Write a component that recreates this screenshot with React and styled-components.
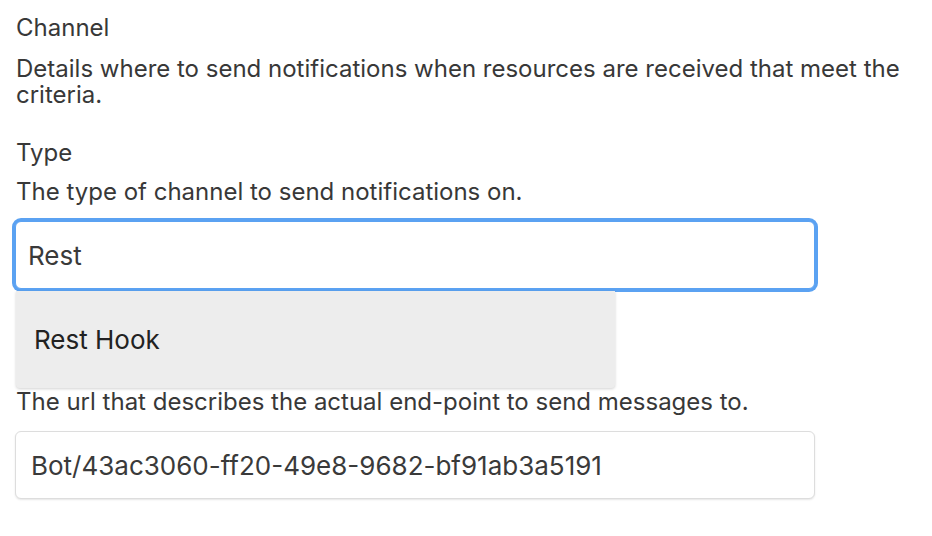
import React from 'react'
import styled, { createGlobalStyle, css } from 'styled-components'

const GlobalStyle = createGlobalStyle`
  html, body {
    margin: 0;
    padding: 0;
    background: #ffffff;
  }
  body {
    font-family: Inter, "Noto Sans", "Liberation Sans", sans-serif;
    color: #383838;
    -webkit-font-smoothing: antialiased;
  }
`;

const Page = styled.div`
  width: 932px;
  height: 536px;
  box-sizing: border-box;
  padding: 15px 16px 0 16px;
  overflow: hidden;
`;

const Heading = styled.div`
  font-size: 24px;
  line-height: 26px;
  color: #383838;
`;

const Text = styled.div`
  font-size: 24px;
  line-height: 26px;
  color: #383838;
  margin-top: ${({ $gap }) => $gap || 13}px;
`;

const Field = styled.div`
  display: flex;
  flex-direction: column;
  margin-top: ${({ $gap }) => $gap}px;
`;

const InputWrap = styled.div`
  position: relative;
  width: 800px;
  margin-top: 16px;
  margin-left: -1px;
`;

const Input = styled.div`
  box-sizing: border-box;
  width: 800px;
  height: 68px;
  display: flex;
  align-items: center;
  padding-left: ${({ $pad }) => $pad}px;
  font-size: 26px;
  color: #3a3a3a;
  background: #fff;
  border: 1px solid #dddddd;
  border-radius: 6px;
  box-shadow: 0 1px 2px rgba(0, 0, 0, 0.1);

  ${({ $focused }) =>
    $focused &&
    css`
      border-color: #5ba2f2;
      box-shadow: 0 0 0 3px #5ba2f2;
    `}
`;

const Menu = styled.div`
  position: absolute;
  top: 70px;
  left: 1px;
  width: 599px;
  background: #ededed;
  border-radius: 0 0 4px 4px;
  box-shadow: 0 1px 3px rgba(0, 0, 0, 0.18);
  z-index: 2;
`;

const Option = styled.div`
  height: 97px;
  display: flex;
  align-items: center;
  padding-left: 18px;
  font-size: 26px;
  color: #222;
`;

export default function App() {
  return (
    <>
      <GlobalStyle />
      <Page>
        <Heading>Channel</Heading>
        <Text $gap={15}>
          Details where to send notifications when resources are received that meet the criteria.
        </Text>

        <Field $gap={32}>
          <Heading>Type</Heading>
          <Text>The type of channel to send notifications on.</Text>
          <InputWrap>
            <Input $focused $pad={12}>Rest</Input>
            <Menu>
              <Option>Rest Hook</Option>
            </Menu>
          </InputWrap>
        </Field>

        <Field $gap={61}>
          <Heading>URL</Heading>
          <Text>The url that describes the actual end-point to send messages to.</Text>
          <InputWrap>
            <Input $pad={15}>Bot/43ac3060-ff20-49e8-9682-bf91ab3a5191</Input>
          </InputWrap>
        </Field>
      </Page>
    </>
  )
}
